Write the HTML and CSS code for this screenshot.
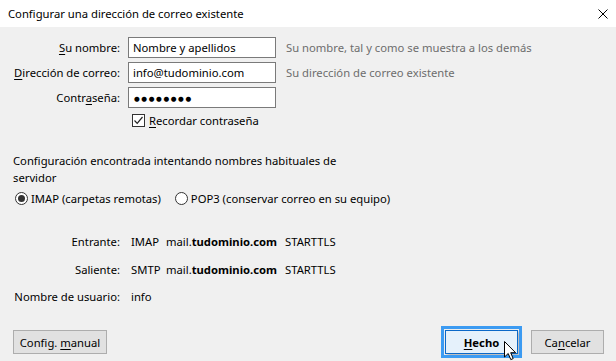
FILE: index.html
```html
<!DOCTYPE html>
<html lang="es">
<head>
  <meta charset="UTF-8" />
  <title>Configurar una dirección de correo existente</title>
  <link rel="stylesheet" href="styles.css">
</head>
<body>
  <div class="window">
    <div class="titlebar">
      <span>Configurar una dirección de correo existente</span>
      <svg class="close" width="10" height="10" viewBox="0 0 10 10">
        <path d="M0.5 0.5 L9.5 9.5 M9.5 0.5 L0.5 9.5" stroke="#000" stroke-width="1" fill="none" />
      </svg>
    </div>

    <div class="form">
      <label class="lbl"><u>S</u>u nombre:</label>
      <div class="field">Nombre y apellidos</div>
      <div class="hint">Su nombre, tal y como se muestra a los demás</div>

      <label class="lbl"><u>D</u>irección de correo:</label>
      <div class="field">info@tudominio.com</div>
      <div class="hint">Su dirección de correo existente</div>

      <label class="lbl">Contr<u>a</u>seña:</label>
      <div class="field"><span class="dots">●●●●●●●●</span></div>
      <div></div>

      <div class="remember">
        <span class="checkbox">
          <svg width="11" height="11" viewBox="0 0 11 11">
            <path d="M1.5 5.5 L4.2 8.3 L9.5 2" stroke="#222" stroke-width="1.2" fill="none" />
          </svg>
        </span>
        <span><u>R</u>ecordar contraseña</span>
      </div>
    </div>

    <p class="found">Configuración encontrada intentando nombres habituales de servidor</p>

    <div class="protocols">
      <span class="option"><span class="radio checked"></span>IMAP (carpetas remotas)</span>
      <span class="option"><span class="radio"></span>POP3 (conservar correo en su equipo)</span>
    </div>

    <div class="servers">
      <span class="lbl">Entrante:</span>
      <span><span class="proto">IMAP</span>mail.<b>tudominio.com</b><span class="sec">STARTTLS</span></span>
      <span class="lbl">Saliente:</span>
      <span><span class="proto">SMTP</span>mail.<b>tudominio.com</b><span class="sec">STARTTLS</span></span>
      <span class="lbl">Nombre de usuario:</span>
      <span>info</span>
    </div>

    <div class="footer">
      <button class="btn manual">Config. <u>m</u>anual</button>
      <div class="actions">
        <button class="btn default"><u>H</u>echo
          <svg class="pointer" width="13" height="20" viewBox="0 0 13 20">
            <path d="M0.5 0.5 L0.5 16 L4.2 12.5 L6.8 18.6 L9.2 17.6 L6.7 11.7 L11.6 11.7 Z" fill="#fff" stroke="#000" stroke-width="1" stroke-linejoin="miter" />
          </svg>
        </button>
        <button class="btn">Ca<u>n</u>celar</button>
      </div>
    </div>
  </div>
</body>
</html>
```
FILE: styles.css
```css
body { margin: 0; background: #f0f0f0; font-family: "Noto Sans", sans-serif; font-size: 11.25px; color: #000; }
u { text-decoration-thickness: 1px; text-underline-offset: 2px; }

.window { height: 361px; display: flex; flex-direction: column; }

.titlebar { height: 27px; background: #fff; display: flex; align-items: center; justify-content: space-between; padding: 0 8px; flex-shrink: 0; }

.form { display: grid; grid-template-columns: 120px 148px auto; column-gap: 8px; row-gap: 4px; margin-top: 10px; }
.lbl { text-align: right; }
.form .lbl { line-height: 21px; }
.field { height: 21px; box-sizing: border-box; border: 1px solid #7a7a7a; background: #fff; padding: 0 4px; line-height: 19px; white-space: nowrap; }
.dots { font-family: "DejaVu Sans", sans-serif; font-size: 6.6px; letter-spacing: 1.6px; position: relative; top: -1px; left: 1px; }
.hint { color: #6d6d6d; line-height: 21px; padding-left: 2px; white-space: nowrap; }

.remember { grid-column: 2 / 4; display: flex; align-items: center; gap: 4px; height: 17px; margin-left: 4px; }
.checkbox { width: 13px; height: 13px; box-sizing: border-box; border: 1px solid #333; background: #fff; display: flex; align-items: center; justify-content: center; }

.found { margin: 23px 0 0 13px; width: 340px; line-height: 17px; }

.protocols { display: flex; gap: 14px; margin: 4px 0 0 15px; line-height: 17px; }
.option { display: flex; align-items: center; gap: 3px; }
.radio { width: 13px; height: 13px; box-sizing: border-box; border: 1px solid #333; border-radius: 50%; background: #fff; display: flex; align-items: center; justify-content: center; }
.radio.checked::after { content: ""; width: 7px; height: 7px; border-radius: 50%; background: #333; }

.servers { display: grid; grid-template-columns: 120px auto; column-gap: 11px; row-gap: 11.5px; margin-top: 27px; line-height: 16px; }
.proto { display: inline-block; width: 35px; }
.sec { margin-left: 8px; }

.footer { margin-top: auto; display: flex; justify-content: space-between; align-items: flex-end; padding: 0 12px 7px 13px; }
.actions { display: flex; gap: 13px; }
.btn { height: 24px; box-sizing: border-box; background: #e1e1e1; border: 1px solid #adadad; font: inherit; color: #000; padding: 0; width: 73px; }
.btn.manual { width: 94px; }
.btn.default { position: relative; background: #e5f1fb; border-color: #0a68c8; font-weight: bold; outline: 3px solid #3c9bf2; outline-offset: 1px; box-shadow: 2px 2px 3px rgba(0,0,0,0.25); }
.pointer { position: absolute; left: 58px; top: 10px; }
```
